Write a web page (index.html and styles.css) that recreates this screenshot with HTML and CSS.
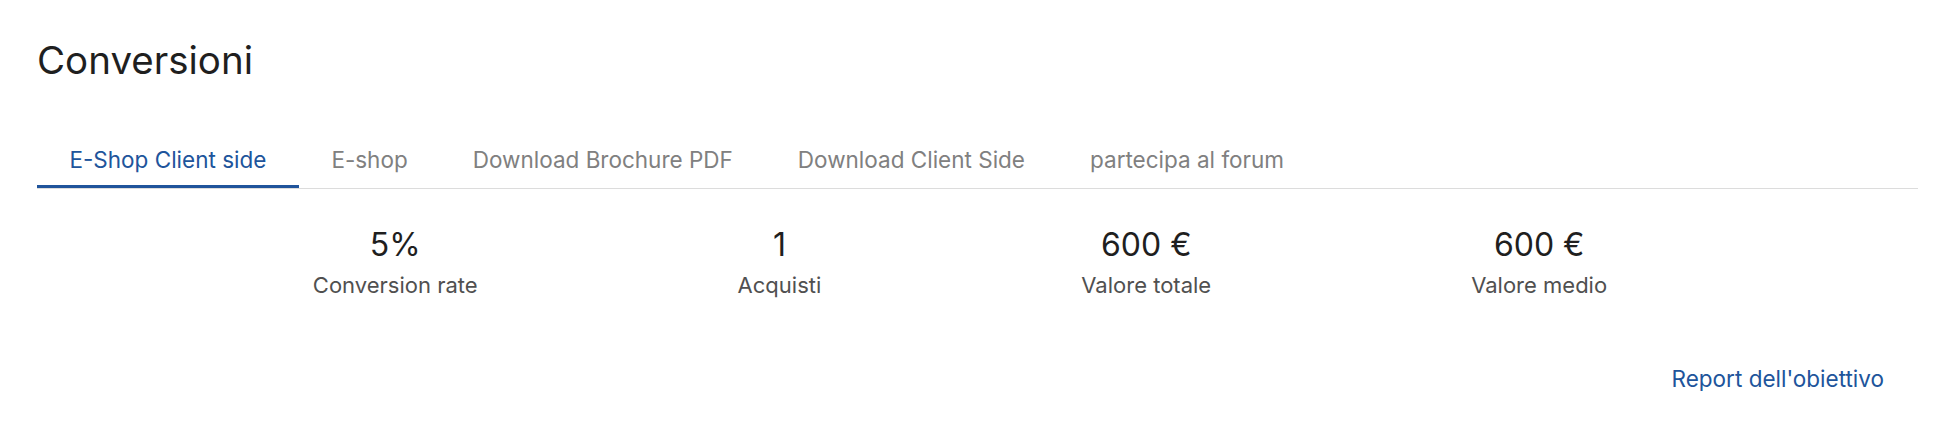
FILE: index.html
```html
<!DOCTYPE html>
<html>
  <head>
    <title>Conversioni</title>
    <link rel="stylesheet" href="styles.css">
  </head>
  <body>
    <div class="goals">
      <h1 class="goals-title">Conversioni</h1>

      <nav class="tabs">
        <a class="tab tab-active" href="#">E-Shop Client side</a>
        <a class="tab" href="#">E-shop</a>
        <a class="tab" href="#">Download Brochure PDF</a>
        <a class="tab" href="#">Download Client Side</a>
        <a class="tab" href="#">partecipa al forum</a>
      </nav>

      <div class="stats">
        <div class="stat">
          <div class="stat-value">5%</div>
          <div class="stat-label">Conversion rate</div>
        </div>
        <div class="stat">
          <div class="stat-value">1</div>
          <div class="stat-label">Acquisti</div>
        </div>
        <div class="stat">
          <div class="stat-value">600 €</div>
          <div class="stat-label">Valore totale</div>
        </div>
        <div class="stat">
          <div class="stat-value">600 €</div>
          <div class="stat-label">Valore medio</div>
        </div>
      </div>

      <div class="goals-footer">
        <a class="report-link" href="#">Report dell'obiettivo</a>
      </div>
    </div>
  </body>
</html>
```

FILE: styles.css
```css
*,
*::before,
*::after {
  margin: 0;
  padding: 0;
  box-sizing: border-box;
}

body {
  font-family: Inter, "Noto Sans", sans-serif;
  background-color: #ffffff;
  color: #1f1f1f;
}

.goals {
  padding: 36px 32px 0 37px;
}

.goals-title {
  font-size: 38.5px;
  font-weight: 400;
  line-height: 48px;
  margin-bottom: 50.5px;
}

.tabs {
  display: flex;
  border-bottom: 1px solid #dcdcdc;
}

.tab {
  position: relative;
  padding: 13px 32.5px 16.5px;
  font-size: 22.5px;
  line-height: 24px;
  color: #808080;
  text-decoration: none;
}

.tab-active {
  color: #20549b;
}

.tab-active::after {
  content: "";
  position: absolute;
  left: 0;
  right: 0;
  bottom: 0;
  height: 3px;
  background-color: #20549b;
}

.stats {
  display: flex;
  justify-content: center;
  gap: 260px;
  margin-top: 37px;
  padding-right: 35px;
  text-align: center;
}

.stat-value {
  font-size: 32px;
  line-height: 38px;
  color: #1f1f1f;
}

.stat-label {
  margin-top: 7.5px;
  font-size: 22px;
  line-height: 26px;
  color: #505050;
}

.goals-footer {
  display: flex;
  justify-content: flex-end;
  margin-top: 69px;
  padding-right: 34px;
}

.report-link {
  font-size: 22.5px;
  line-height: 24px;
  color: #20549b;
  text-decoration: none;
}
```
